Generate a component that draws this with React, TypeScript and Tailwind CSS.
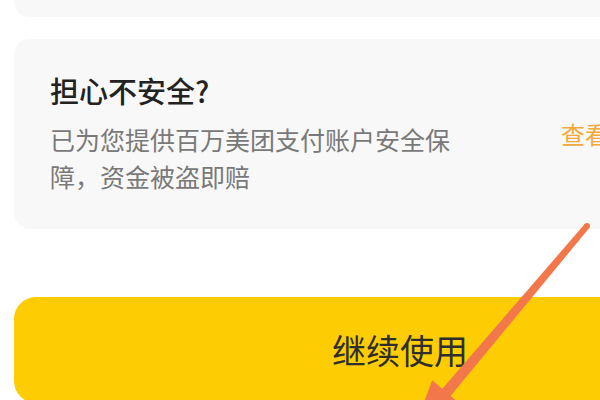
import React from "react";

export default function App() {
  return (
    <div className="relative w-[600px] h-[400px] overflow-hidden bg-white font-['Noto_Sans_CJK_SC','Noto_Sans',sans-serif]">
      <div className="flex flex-col w-[772px] ml-[14px]">
        <div className="h-[60px] -mt-[43px] rounded-[16px] bg-[#f8f8f8]" />
        <div className="mt-[22px] h-[190px] rounded-[16px] bg-[#f8f8f8] flex items-center pl-[36px]">
          <div className="flex flex-col w-[440px] -mt-[4px]">
            <div className="text-[29px] leading-[40px] font-medium text-[#222222]">担心不安全?</div>
            <div className="mt-[11px] text-[25px] leading-[37px] text-[#797979]">
              已为您提供百万美团支付账户安全保障，资金被盗即赔
            </div>
          </div>
          <div className="ml-[71px] text-[24px] leading-[32px] text-[#f2a93b] whitespace-nowrap">查看详情</div>
        </div>
        <div className="mt-[68px] h-[106px] rounded-[22px] bg-[#fecc02] flex items-center justify-center">
          <span className="text-[34px] leading-[44px] text-[#2e2e2e]">继续使用</span>
        </div>
      </div>
      <svg className="absolute inset-0 pointer-events-none" width="600" height="400" viewBox="0 0 600 400">
        <circle cx="587" cy="226" r="3" fill="#f2784b" />
        <polygon
          points="589.3,227.9 584.7,224.1 441.7,389.4 450.1,396.6"
          fill="#f2784b"
        />
        <polygon points="432.2,380.3 459.6,403.7 413.5,430" fill="#f2784b" />
      </svg>
    </div>
  );
}
